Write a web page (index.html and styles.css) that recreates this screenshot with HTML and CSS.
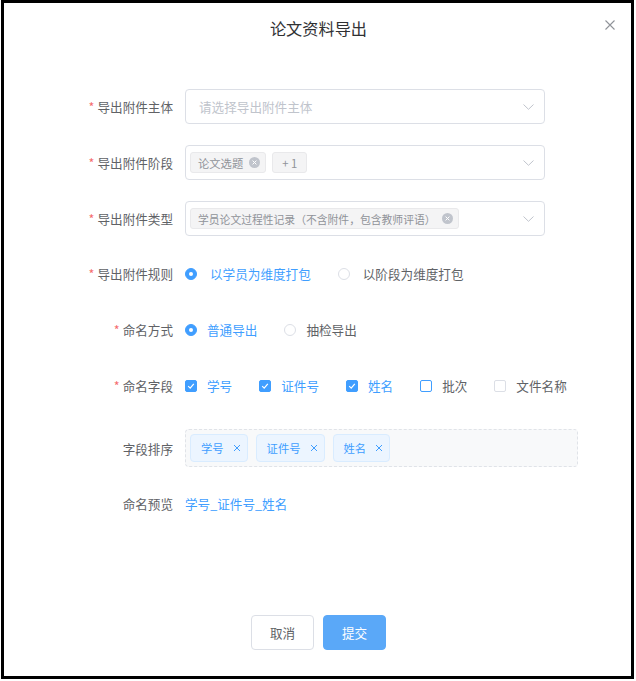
FILE: index.html
```html
<!DOCTYPE html>
<html lang="zh-CN">
<head>
<meta charset="utf-8">
<title>论文资料导出</title>
<link rel="stylesheet" href="styles.css">
</head>
<body>
<div class="dialog">
  <div class="header">
    <h1 class="title">论文资料导出</h1>
    <button class="close" type="button" aria-label="关闭">
      <svg width="10" height="10" viewBox="0 0 10 10"><path d="M0.5 0.5 L9.5 9.5 M9.5 0.5 L0.5 9.5" stroke="#909399" stroke-width="1.1" fill="none"/></svg>
    </button>
  </div>

  <form class="form">
    <div class="row">
      <label class="label req">导出附件主体</label>
      <div class="select select-empty">
        <span class="placeholder">请选择导出附件主体</span>
        <svg class="chev" width="11" height="6" viewBox="0 0 11 6"><polyline points="0.5,0.5 5.5,5.3 10.5,0.5" fill="none" stroke="#c0c4cc" stroke-width="1"/></svg>
      </div>
    </div>

    <div class="row">
      <label class="label req">导出附件阶段</label>
      <div class="select">
        <span class="tag">论文选题<i class="tag-x"><svg width="11" height="11" viewBox="0 0 11 11"><path d="M3.6 3.6 L7.4 7.4 M7.4 3.6 L3.6 7.4" stroke="#fff" stroke-width="1"/></svg></i></span>
        <span class="tag tag-more">+ 1</span>
        <svg class="chev" width="11" height="6" viewBox="0 0 11 6"><polyline points="0.5,0.5 5.5,5.3 10.5,0.5" fill="none" stroke="#c0c4cc" stroke-width="1"/></svg>
      </div>
    </div>

    <div class="row row-last-select">
      <label class="label req">导出附件类型</label>
      <div class="select">
        <span class="tag tag-long">学员论文过程性记录（不含附件，包含教师评语）<i class="tag-x"><svg width="11" height="11" viewBox="0 0 11 11"><path d="M3.6 3.6 L7.4 7.4 M7.4 3.6 L3.6 7.4" stroke="#fff" stroke-width="1"/></svg></i></span>
        <svg class="chev" width="11" height="6" viewBox="0 0 11 6"><polyline points="0.5,0.5 5.5,5.3 10.5,0.5" fill="none" stroke="#c0c4cc" stroke-width="1"/></svg>
      </div>
    </div>

    <div class="row">
      <label class="label req">导出附件规则</label>
      <div class="options wide">
        <span class="radio on"><i></i>以学员为维度打包</span>
        <span class="radio"><i></i>以阶段为维度打包</span>
      </div>
    </div>

    <div class="row">
      <label class="label req">命名方式</label>
      <div class="options">
        <span class="radio on"><i></i>普通导出</span>
        <span class="radio"><i></i>抽检导出</span>
      </div>
    </div>

    <div class="row">
      <label class="label req">命名字段</label>
      <div class="options">
        <span class="check on"><i><svg width="12" height="12" viewBox="0 0 12 12"><polyline points="3.2,6.2 5.2,8.2 8.8,3.8" fill="none" stroke="#fff" stroke-width="1.2"/></svg></i>学号</span>
        <span class="check on"><i><svg width="12" height="12" viewBox="0 0 12 12"><polyline points="3.2,6.2 5.2,8.2 8.8,3.8" fill="none" stroke="#fff" stroke-width="1.2"/></svg></i>证件号</span>
        <span class="check on"><i><svg width="12" height="12" viewBox="0 0 12 12"><polyline points="3.2,6.2 5.2,8.2 8.8,3.8" fill="none" stroke="#fff" stroke-width="1.2"/></svg></i>姓名</span>
        <span class="check hover"><i></i>批次</span>
        <span class="check"><i></i>文件名称</span>
      </div>
    </div>

    <div class="row row-sort">
      <label class="label">字段排序</label>
      <div class="sortbox">
        <span class="stag">学号<svg width="8" height="8" viewBox="0 0 8 8"><path d="M1 1 L7 7 M7 1 L1 7" stroke="#409eff" stroke-width="1"/></svg></span>
        <span class="stag">证件号<svg width="8" height="8" viewBox="0 0 8 8"><path d="M1 1 L7 7 M7 1 L1 7" stroke="#409eff" stroke-width="1"/></svg></span>
        <span class="stag">姓名<svg width="8" height="8" viewBox="0 0 8 8"><path d="M1 1 L7 7 M7 1 L1 7" stroke="#409eff" stroke-width="1"/></svg></span>
      </div>
    </div>

    <div class="row">
      <label class="label">命名预览</label>
      <span class="preview">学号_证件号_姓名</span>
    </div>
  </form>

  <div class="footer">
    <button class="btn" type="button">取消</button>
    <button class="btn primary" type="button">提交</button>
  </div>
</div>
</body>
</html>
```

FILE: styles.css
```css
* { box-sizing: border-box; }

body {
  margin: 0;
  background: #fff;
  font-family: "Noto Sans CJK SC", "Noto Sans", sans-serif;
  color: #606266;
}

.dialog {
  margin-left: 1px;
  width: 633px;
  height: 679px;
  border: 3px solid #000;
  background: #fff;
  display: flex;
  flex-direction: column;
}

.header {
  display: grid;
  grid-template-columns: 1fr auto 1fr;
  padding: 15px 16px 0 18px;
}

.title {
  grid-column: 2;
  margin: 0;
  font-size: 16.2px;
  font-weight: 400;
  line-height: 20px;
  color: #303133;
}

.close {
  grid-column: 3;
  justify-self: end;
  align-self: start;
  margin-top: 2px;
  padding: 0;
  border: 0;
  background: none;
  width: 10px;
  height: 10px;
  display: flex;
}

.form {
  margin: 51px 0 0;
  padding-left: 31px;
}

.row {
  display: flex;
  align-items: center;
  min-height: 35px;
  margin-bottom: 21px;
}

.row-last-select { margin-bottom: 20px; }

.label {
  width: 150px;
  flex: none;
  text-align: right;
  padding-right: 12px;
  font-size: 12.6px;
  line-height: 35px;
  color: #606266;
}

.req::before {
  content: "*";
  color: #f56c6c;
  margin-right: 3px;
}

.select {
  width: 360px;
  height: 35px;
  border: 1px solid #dcdfe6;
  border-radius: 4px;
  display: flex;
  align-items: center;
  gap: 6px;
  padding: 0 10px 0 4px;
}

.select-empty { padding-left: 13px; }

.placeholder {
  font-size: 12.6px;
  color: #c0c4cc;
}

.chev { margin-left: auto; flex: none; }

.tag {
  height: 21px;
  display: flex;
  align-items: center;
  gap: 6px;
  padding: 0 5px 0 7px;
  background: #f4f4f5;
  border: 1px solid #e9e9eb;
  border-radius: 3px;
  color: #909399;
  font-size: 11.3px;
  white-space: nowrap;
}

.tag-long { font-size: 10.8px; }

.tag-more { padding: 0 9px; }

.tag-x {
  width: 11px;
  height: 11px;
  border-radius: 50%;
  background: #c0c4cc;
  display: flex;
}

.options {
  display: flex;
  align-items: center;
}

.radio, .check {
  display: flex;
  align-items: center;
  margin-right: 27px;
  font-size: 12.6px;
  color: #606266;
}

.radio i {
  width: 12px;
  height: 12px;
  border: 1px solid #dcdfe6;
  border-radius: 50%;
  margin-right: 10px;
  display: flex;
  align-items: center;
  justify-content: center;
}

.wide .radio i { margin-right: 13px; }

.radio.on, .check.on { color: #409eff; }

.radio.on i {
  background: #409eff;
  border-color: #409eff;
}

.radio.on i::after {
  content: "";
  width: 4px;
  height: 4px;
  border-radius: 50%;
  background: #fff;
}

.check i {
  width: 12px;
  height: 12px;
  border: 1px solid #dcdfe6;
  border-radius: 2px;
  margin-right: 10px;
  display: flex;
  overflow: hidden;
}

.check.on i {
  background: #409eff;
  border-color: #409eff;
}

.check.on i svg { margin: -1px; }

.check.hover i { border-color: #409eff; }

.row-sort { margin-top: 26px; margin-bottom: 19px; }

.sortbox {
  width: 393px;
  height: 38px;
  border: 1px dashed #e0e3e8;
  border-radius: 4px;
  background: #f8f9fa;
  display: flex;
  align-items: center;
  gap: 8px;
  padding: 0 4px;
}

.stag {
  height: 28px;
  display: flex;
  align-items: center;
  gap: 9px;
  padding: 0 6px 0 10px;
  background: #ecf5ff;
  border: 1px solid #d9ecff;
  border-radius: 4px;
  color: #409eff;
  font-size: 11.3px;
}

.preview {
  font-size: 12.6px;
  color: #409eff;
}

.footer {
  margin-top: auto;
  padding: 0 0 26px 2px;
  display: flex;
  justify-content: center;
  gap: 9px;
}

.btn {
  width: 63px;
  height: 35px;
  border: 1px solid #dcdfe6;
  border-radius: 4px;
  background: #fff;
  color: #606266;
  font-family: inherit;
  font-size: 12.6px;
  padding: 0;
}

.btn.primary {
  background: #5aa8f8;
  border-color: #5aa8f8;
  color: #fff;
}
```
